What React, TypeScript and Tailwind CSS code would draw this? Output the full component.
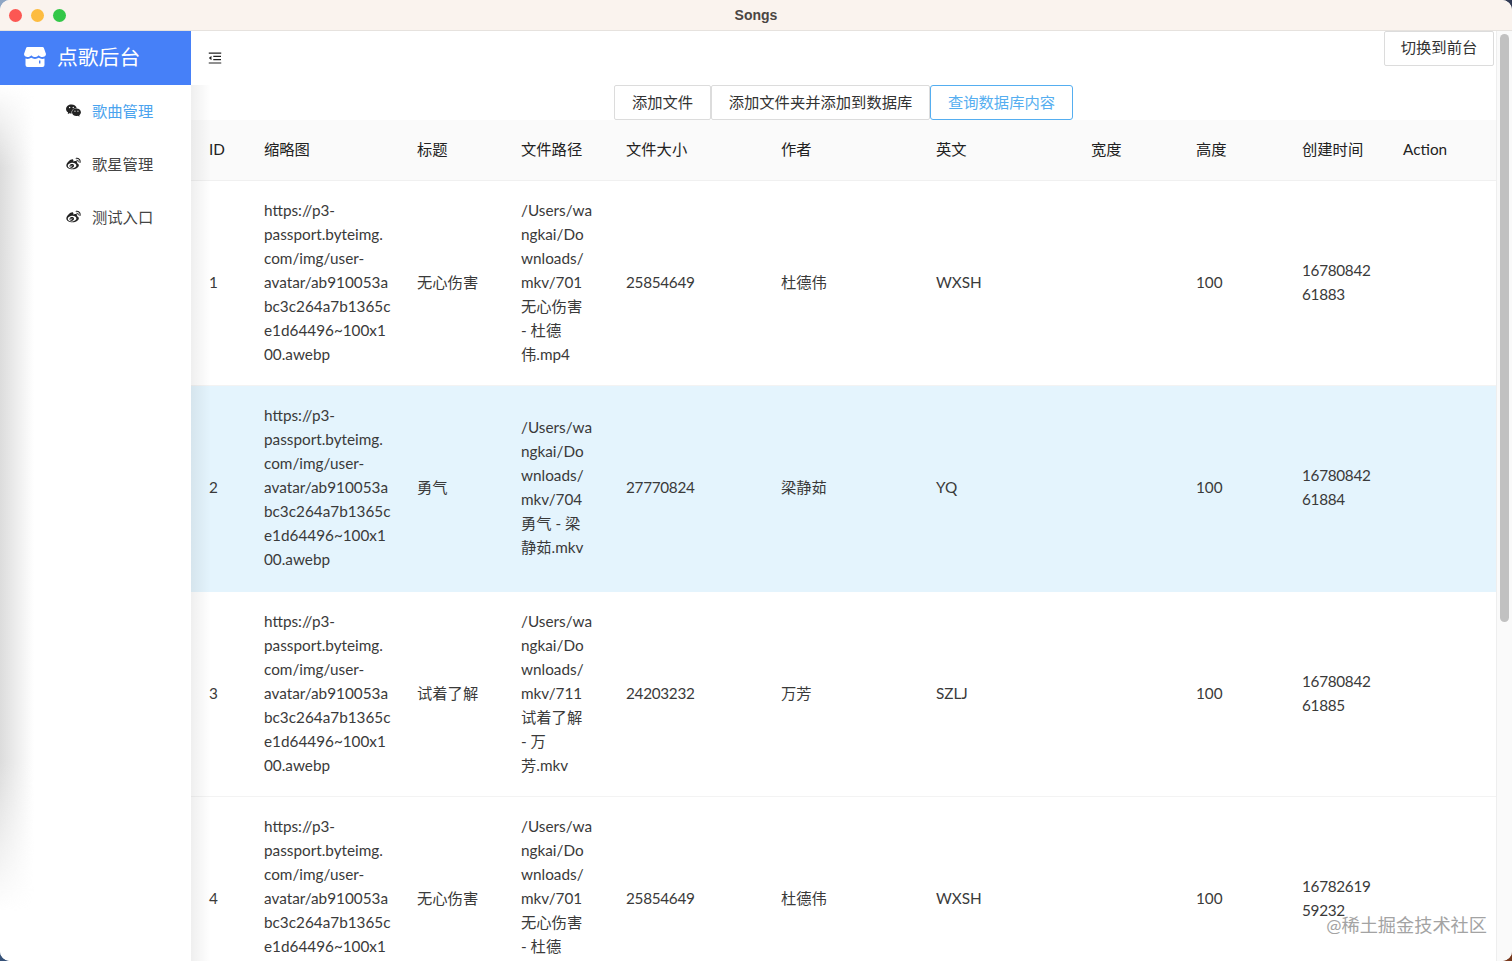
import { AiFillWechat, AiOutlineMenuFold, AiOutlineWeibo } from 'react-icons/ai';

const columns = [
  { title: 'ID', width: 'w-[55px]' },
  { title: '缩略图', width: 'w-[153px]' },
  { title: '标题', width: 'w-[104px]' },
  { title: '文件路径', width: 'w-[105px]' },
  { title: '文件大小', width: 'w-[155px]' },
  { title: '作者', width: 'w-[155px]' },
  { title: '英文', width: 'w-[155px]' },
  { title: '宽度', width: 'w-[105px]' },
  { title: '高度', width: 'w-[106px]' },
  { title: '创建时间', width: 'w-[101px]' },
  { title: 'Action', width: 'w-[111px]' },
];

const thumb = [
  'https://p3-',
  'passport.byteimg.',
  'com/img/user-',
  'avatar/ab910053a',
  'bc3c264a7b1365c',
  'e1d64496~100x1',
  '00.awebp',
];

const songs = [
  {
    id: 1,
    title: '无心伤害',
    path: ['/Users/wa', 'ngkai/Do', 'wnloads/', 'mkv/701', '无心伤害', '- 杜德', '伟.mp4'],
    size: 25854649,
    author: '杜德伟',
    en: 'WXSH',
    created: ['16780842', '61883'],
  },
  {
    id: 2,
    title: '勇气',
    path: ['/Users/wa', 'ngkai/Do', 'wnloads/', 'mkv/704', '勇气 - 梁', '静茹.mkv'],
    size: 27770824,
    author: '梁静茹',
    en: 'YQ',
    created: ['16780842', '61884'],
  },
  {
    id: 3,
    title: '试着了解',
    path: ['/Users/wa', 'ngkai/Do', 'wnloads/', 'mkv/711', '试着了解', '- 万', '芳.mkv'],
    size: 24203232,
    author: '万芳',
    en: 'SZLJ',
    created: ['16780842', '61885'],
  },
  {
    id: 4,
    title: '无心伤害',
    path: ['/Users/wa', 'ngkai/Do', 'wnloads/', 'mkv/701', '无心伤害', '- 杜德', '伟.mp4'],
    size: 25854649,
    author: '杜德伟',
    en: 'WXSH',
    created: ['16782619', '59232'],
  },
];

const ShopLogo = () => (
  <svg
    className="shrink-0"
    height="20"
    viewBox="0 0 22 20"
    width="22"
  >
    <path
      d="M3.5 0h15a1.5 1.5 0 0 1 1.3.8L22 7c0 2-1.6 3-3.7 3-1.5 0-2.8-.7-3.6-1.8-.8 1.1-2.2 1.8-3.7 1.8s-2.9-.7-3.7-1.8C6.5 9.3 5.2 10 3.7 10 1.6 10 0 9 0 7L2.2.8A1.5 1.5 0 0 1 3.5 0z"
      fill="#fff"
    />
    <path
      d="M1.5 11.5c.7.3 1.4.4 2.2.4 1.3 0 2.6-.4 3.6-1.1 1 .7 2.3 1.1 3.7 1.1s2.7-.4 3.7-1.1c1 .7 2.3 1.1 3.6 1.1.8 0 1.5-.1 2.2-.4V18a2 2 0 0 1-2 2h-15a2 2 0 0 1-2-2z"
      fill="#fff"
    />
    <rect
      fill="#4680f8"
      height="3"
      width="1.4"
      x="15"
      y="13.5"
    />
  </svg>
);

const Lines = ({ lines, className }: { lines: string[]; className?: string }) => (
  <>
    {lines.map((line) => (
      <div
        key={line}
        className={`whitespace-nowrap ${className ?? ''}`}
      >
        {line}
      </div>
    ))}
  </>
);

const Sidebar = () => {
  const menu = [
    { label: '歌曲管理', Icon: AiFillWechat, active: true },
    { label: '歌星管理', Icon: AiOutlineWeibo, active: false },
    { label: '测试入口', Icon: AiOutlineWeibo, active: false },
  ];

  return (
    <aside className="relative flex w-[191px] shrink-0 flex-col bg-white">
      <div className="flex h-[54px] items-center gap-[11px] bg-[#4680f8] pb-[2px] pl-[24px] text-white">
        <ShopLogo />
        <span className="text-[20.8px]">点歌后台</span>
      </div>
      <nav className="flex flex-col">
        {menu.map(({ label, Icon, active }) => (
          <div
            key={label}
            className="flex h-[53px] items-center gap-[10px] pb-[2px] pl-[65px]"
          >
            <Icon className="text-[17px] text-[#222]" />
            <span className={active ? 'text-[#4aa3ee]' : 'text-[#444]'}>{label}</span>
          </div>
        ))}
      </nav>
      <div className="pointer-events-none absolute top-[54px] bottom-[50px] left-0 w-[34px] bg-gradient-to-r from-[#dcdcdc] to-transparent [mask-image:linear-gradient(to_bottom,transparent,black_10%,black_82%,transparent)]" />
    </aside>
  );
};

const Toolbar = () => (
  <div className="flex h-[35px] justify-center">
    <button className="h-[35px] w-[97px] rounded-[2px] border border-[#dcdcdc] bg-white pb-[2px] text-[#333]">添加文件</button>
    <button className="h-[35px] w-[219px] rounded-[2px] border border-[#dcdcdc] bg-white pb-[2px] text-[#333]">添加文件夹并添加到数据库</button>
    <button className="h-[35px] w-[143px] rounded-[3px] border border-[#55aef0] bg-white pb-[2px] text-[#55aef0]">查询数据库内容</button>
  </div>
);

const SongTable = () => (
  <table className="w-[1305px] table-fixed border-collapse">
    <colgroup>
      {columns.map((column) => (
        <col
          key={column.title}
          className={column.width}
        />
      ))}
    </colgroup>
    <thead>
      <tr className="h-[60px] border-b border-[#f0f0f0] bg-[#fafafa] text-left">
        {columns.map((column) => (
          <th
            key={column.title}
            className="pb-[2px] pl-[18px] font-normal text-[#222]"
          >
            {column.title}
          </th>
        ))}
      </tr>
    </thead>
    <tbody>
      {songs.map((song) => (
        <tr
          key={song.id}
          className={song.id === 2 ? 'h-[206px] border-b border-[#e4f4fd] bg-[#e4f4fd]' : 'border-b border-[#f3f3f3]'}
        >
          <td className="pt-[17px] pb-[19px] pl-[18px]">{song.id}</td>
          <td className="pt-[17px] pb-[19px] pl-[18px]">
            <Lines lines={thumb} />
          </td>
          <td className="pt-[17px] pb-[19px] pl-[18px]">{song.title}</td>
          <td className="pt-[17px] pb-[19px] pl-[18px]">
            <Lines lines={song.path} />
          </td>
          <td className="pt-[17px] pb-[19px] pl-[18px] tracking-[-0.3px]">{song.size}</td>
          <td className="pt-[17px] pb-[19px] pl-[18px]">{song.author}</td>
          <td className="pt-[17px] pb-[19px] pl-[18px]">{song.en}</td>
          <td className="pt-[17px] pb-[19px] pl-[18px]" />
          <td className="pt-[17px] pb-[19px] pl-[18px]">100</td>
          <td className="pt-[17px] pb-[19px] pl-[18px]">
            <Lines
              className="tracking-[-0.3px]"
              lines={song.created}
            />
          </td>
          <td className="pt-[17px] pb-[19px] pl-[18px]" />
        </tr>
      ))}
    </tbody>
  </table>
);

const App = () => {
  return (
    <div className="h-screen w-full overflow-hidden bg-[linear-gradient(135deg,#8fa6c4,#1d3a63_50%,#7a3a1e)]">
      <div className="relative flex h-full flex-col overflow-hidden rounded-[10px] bg-white font-['Lato','Noto_Sans_CJK_SC',sans-serif] text-[15.3px] leading-6 text-[#3a3a3a]">
        <header className="relative flex h-[31px] shrink-0 items-center justify-center border-b border-[#e6e2de] bg-[#faf3ee]">
          <div className="absolute left-[9px] flex gap-[9px]">
            <span className="size-[13px] rounded-full bg-[#fc5753]" />
            <span className="size-[13px] rounded-full bg-[#fdbc40]" />
            <span className="size-[13px] rounded-full bg-[#33c748]" />
          </div>
          <span className="font-['Liberation_Sans',sans-serif] text-[14px] font-bold text-[#4a4543]">Songs</span>
        </header>

        <div className="flex min-h-0 flex-1">
          <Sidebar />

          <main className="relative flex min-w-0 flex-1 flex-col overflow-hidden">
            <div className="flex h-[54px] shrink-0 items-start justify-between">
              <AiOutlineMenuFold className="mt-[19px] ml-[16px] text-[16px] text-[#222]" />
              <button className="mr-[2px] h-[35px] w-[110px] rounded-[2px] border border-[#dcdcdc] bg-white pb-[3px] text-[#333]">切换到前台</button>
            </div>
            <Toolbar />
            <SongTable />
            <div className="pointer-events-none absolute top-[54px] bottom-0 left-0 w-[20px] bg-gradient-to-r from-[#00000010] to-transparent" />
          </main>

          <div className="flex w-[16px] shrink-0 flex-col border-l border-[#eeeeee] bg-[#fafafa] pt-[3px]">
            <div className="mx-auto h-[588px] w-[9px] rounded-full bg-[#c1c1c1]" />
          </div>
        </div>

        <span className="absolute right-[25px] bottom-[24px] text-[18.2px] leading-6 text-[#a3a3a3] [text-shadow:0_0_2px_#ffffff]">@稀土掘金技术社区</span>
      </div>
    </div>
  );
};

export default App;
